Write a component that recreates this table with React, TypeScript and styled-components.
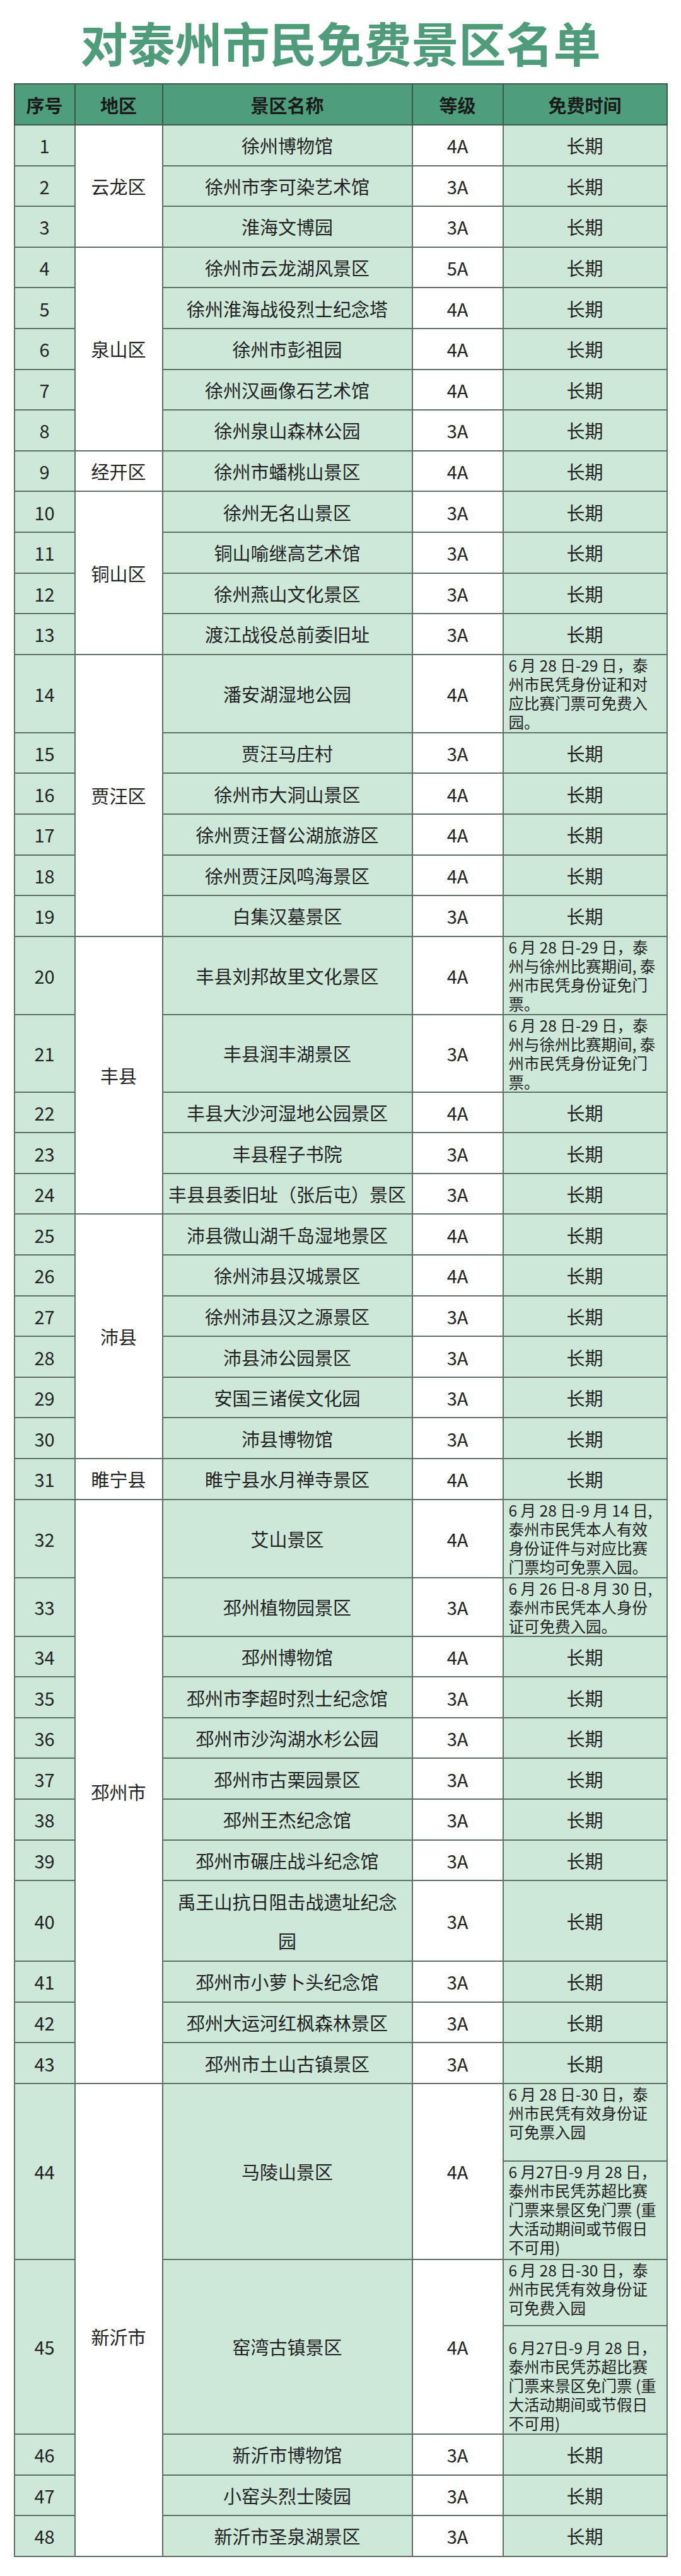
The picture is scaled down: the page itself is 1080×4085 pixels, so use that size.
import React from 'react';
import styled, { createGlobalStyle } from 'styled-components';

const GlobalStyle = createGlobalStyle`
  html, body {
    margin: 0;
    padding: 0;
    background: #ffffff;
  }
  body {
    font-family: 'Noto Sans CJK SC', 'Noto Sans', sans-serif;
    color: #222;
  }
`;

type Region = { name: string; span: number; nudge?: number };
type SubNote = { lines: string[]; h: number; align: 'top' | 'bottom' };
type Spot = {
  no: number;
  region?: Region;
  name: string[];
  level: string;
  note?: string[];
  h?: number;
  split?: [SubNote, SubNote];
};

const ROW = 64.6;

const promo = ['6 月 28 日-29 日，泰', '州与徐州比赛期间, 泰', '州市民凭身份证免门', '票。'];
const suchao = ['6 月27日-9 月 28 日，', '泰州市民凭苏超比赛', '门票来景区免门票 (重', '大活动期间或节假日', '不可用)'];

const spots: Spot[] = [
  { no: 1, region: { name: '云龙区', span: 3 }, name: ['徐州博物馆'], level: '4A' },
  { no: 2, name: ['徐州市李可染艺术馆'], level: '3A' },
  { no: 3, name: ['淮海文博园'], level: '3A' },
  { no: 4, region: { name: '泉山区', span: 5 }, name: ['徐州市云龙湖风景区'], level: '5A' },
  { no: 5, name: ['徐州淮海战役烈士纪念塔'], level: '4A' },
  { no: 6, name: ['徐州市彭祖园'], level: '4A' },
  { no: 7, name: ['徐州汉画像石艺术馆'], level: '4A' },
  { no: 8, name: ['徐州泉山森林公园'], level: '3A' },
  { no: 9, region: { name: '经开区', span: 1 }, name: ['徐州市蟠桃山景区'], level: '4A' },
  { no: 10, region: { name: '铜山区', span: 4 }, name: ['徐州无名山景区'], level: '3A' },
  { no: 11, name: ['铜山喻继高艺术馆'], level: '3A' },
  { no: 12, name: ['徐州燕山文化景区'], level: '3A' },
  { no: 13, name: ['渡江战役总前委旧址'], level: '3A' },
  {
    no: 14,
    region: { name: '贾汪区', span: 6 },
    name: ['潘安湖湿地公园'],
    level: '4A',
    h: 124,
    note: ['6 月 28 日-29 日，泰', '州市民凭身份证和对', '应比赛门票可免费入', '园。'],
  },
  { no: 15, name: ['贾汪马庄村'], level: '3A' },
  { no: 16, name: ['徐州市大洞山景区'], level: '4A' },
  { no: 17, name: ['徐州贾汪督公湖旅游区'], level: '4A' },
  { no: 18, name: ['徐州贾汪凤鸣海景区'], level: '4A' },
  { no: 19, name: ['白集汉墓景区'], level: '3A' },
  { no: 20, region: { name: '丰县', span: 5 }, name: ['丰县刘邦故里文化景区'], level: '4A', h: 124, note: promo },
  { no: 21, name: ['丰县润丰湖景区'], level: '3A', h: 123, note: promo },
  { no: 22, name: ['丰县大沙河湿地公园景区'], level: '4A' },
  { no: 23, name: ['丰县程子书院'], level: '3A' },
  { no: 24, name: ['丰县县委旧址（张后屯）景区'], level: '3A' },
  { no: 25, region: { name: '沛县', span: 6 }, name: ['沛县微山湖千岛湿地景区'], level: '4A' },
  { no: 26, name: ['徐州沛县汉城景区'], level: '4A' },
  { no: 27, name: ['徐州沛县汉之源景区'], level: '3A' },
  { no: 28, name: ['沛县沛公园景区'], level: '3A' },
  { no: 29, name: ['安国三诸侯文化园'], level: '3A' },
  { no: 30, name: ['沛县博物馆'], level: '3A' },
  { no: 31, region: { name: '睢宁县', span: 1 }, name: ['睢宁县水月禅寺景区'], level: '4A' },
  {
    no: 32,
    region: { name: '邳州市', span: 12 },
    name: ['艾山景区'],
    level: '4A',
    h: 124,
    note: ['6 月 28 日-9 月 14 日,', '泰州市民凭本人有效', '身份证件与对应比赛', '门票均可免票入园。'],
  },
  {
    no: 33,
    name: ['邳州植物园景区'],
    level: '3A',
    h: 92,
    note: ['6 月 26 日-8 月 30 日,', '泰州市民凭本人身份', '证可免费入园。'],
  },
  { no: 34, name: ['邳州博物馆'], level: '4A' },
  { no: 35, name: ['邳州市李超时烈士纪念馆'], level: '3A' },
  { no: 36, name: ['邳州市沙沟湖水杉公园'], level: '3A' },
  { no: 37, name: ['邳州市古栗园景区'], level: '3A' },
  { no: 38, name: ['邳州王杰纪念馆'], level: '3A' },
  { no: 39, name: ['邳州市碾庄战斗纪念馆'], level: '3A' },
  { no: 40, name: ['禹王山抗日阻击战遗址纪念', '园'], level: '3A', h: 128 },
  { no: 41, name: ['邳州市小萝卜头纪念馆'], level: '3A' },
  { no: 42, name: ['邳州大运河红枫森林景区'], level: '3A' },
  { no: 43, name: ['邳州市土山古镇景区'], level: '3A' },
  {
    no: 44,
    region: { name: '新沂市', span: 7, nudge: 52 },
    name: ['马陵山景区'],
    level: '4A',
    split: [
      { lines: ['6 月 28 日-30 日，泰', '州市民凭有效身份证', '可免票入园'], h: 123, align: 'top' },
      { lines: suchao, h: 156, align: 'top' },
    ],
  },
  {
    no: 45,
    name: ['窑湾古镇景区'],
    level: '4A',
    split: [
      { lines: ['6 月 28 日-30 日，泰', '州市民凭有效身份证', '可免费入园'], h: 105, align: 'top' },
      { lines: suchao, h: 172, align: 'bottom' },
    ],
  },
  { no: 46, name: ['新沂市博物馆'], level: '3A' },
  { no: 47, name: ['小窑头烈士陵园'], level: '3A' },
  { no: 48, name: ['新沂市圣泉湖景区'], level: '3A' },
];

const Page = styled.div`
  width: 1080px;
  height: 4085px;
  overflow: hidden;
  background: #ffffff;
`;

const TitleBar = styled.header`
  height: 132px;
  display: flex;
  align-items: center;
  justify-content: center;
`;

const Title = styled.h1`
  margin: 0;
  font-size: 75px;
  line-height: 75px;
  font-weight: 700;
  color: #4f9c7b;
`;

const Table = styled.table`
  width: 1035px;
  margin: 0 auto;
  border-collapse: collapse;
  table-layout: fixed;
  border: 2px solid #5b6b62;
`;

const HeadRow = styled.tr`
  height: 65px;
  background: #4e9e7e;
`;

const HeadCell = styled.th`
  border: 2px solid #3f5a4c;
  padding: 0;
  font-size: 29px;
  line-height: 36px;
  font-weight: 700;
  color: #1b1b1b;
  text-align: center;
  vertical-align: middle;
`;

const Row = styled.tr<{ $h: number }>`
  height: ${(p) => p.$h}px;
`;

const Cell = styled.td<{ $tone: 'green' | 'white'; $nudge?: number; $lh?: number }>`
  border: 2px solid #5f6f66;
  padding: ${(p) => (p.$nudge ? `${p.$nudge}px 0 0` : '0')};
  background: ${(p) => (p.$tone === 'green' ? '#cde8d9' : '#ffffff')};
  font-size: 29px;
  line-height: ${(p) => p.$lh ?? 36}px;
  color: #222;
  text-align: center;
  vertical-align: middle;
  white-space: nowrap;
`;

const NoteCell = styled.td<{ $align: 'top' | 'bottom' }>`
  border: 2px solid #5f6f66;
  padding: ${(p) => (p.$align === 'bottom' ? '0 0 1px 8px' : '1px 0 0 8px')};
  background: #cde8d9;
  font-size: 24.5px;
  line-height: 30px;
  color: #222;
  text-align: left;
  vertical-align: ${(p) => p.$align};
  white-space: nowrap;
`;

const Lines = ({ lines }: { lines: string[] }) => (
  <>
    {lines.map((l, i) => (
      <React.Fragment key={i}>
        {i > 0 && <br />}
        {l}
      </React.Fragment>
    ))}
  </>
);

const SpotRows = ({ s }: { s: Spot }) => {
  const span = s.split ? 2 : 1;
  const region = s.region && (
    <Cell $tone='white' rowSpan={s.region.span} $nudge={s.region.nudge}>
      {s.region.name}
    </Cell>
  );
  const lead = (
    <>
      <Cell $tone='green' rowSpan={span}>
        {s.no}
      </Cell>
      {region}
      <Cell $tone='green' rowSpan={span} $lh={s.name.length > 1 ? 62 : undefined}>
        <Lines lines={s.name} />
      </Cell>
      <Cell $tone='white' rowSpan={span}>
        {s.level}
      </Cell>
    </>
  );

  if (s.split) {
    const [a, b] = s.split;
    return (
      <>
        <Row $h={a.h}>
          {lead}
          <NoteCell $align={a.align}>
            <Lines lines={a.lines} />
          </NoteCell>
        </Row>
        <Row $h={b.h}>
          <NoteCell $align={b.align}>
            <Lines lines={b.lines} />
          </NoteCell>
        </Row>
      </>
    );
  }

  return (
    <Row $h={s.h ?? ROW}>
      {lead}
      {s.note ? (
        <NoteCell $align='top'>
          <Lines lines={s.note} />
        </NoteCell>
      ) : (
        <Cell $tone='green'>长期</Cell>
      )}
    </Row>
  );
};

const App = () => (
  <Page>
    <GlobalStyle />
    <TitleBar>
      <Title>对泰州市民免费景区名单</Title>
    </TitleBar>
    <Table>
      <colgroup>
        <col style={{ width: 96 }} />
        <col style={{ width: 139 }} />
        <col style={{ width: 396 }} />
        <col style={{ width: 144 }} />
        <col style={{ width: 260 }} />
      </colgroup>
      <thead>
        <HeadRow>
          <HeadCell>序号</HeadCell>
          <HeadCell>地区</HeadCell>
          <HeadCell>景区名称</HeadCell>
          <HeadCell>等级</HeadCell>
          <HeadCell>免费时间</HeadCell>
        </HeadRow>
      </thead>
      <tbody>
        {spots.map((s) => (
          <SpotRows key={s.no} s={s} />
        ))}
      </tbody>
    </Table>
  </Page>
);

export default App;
